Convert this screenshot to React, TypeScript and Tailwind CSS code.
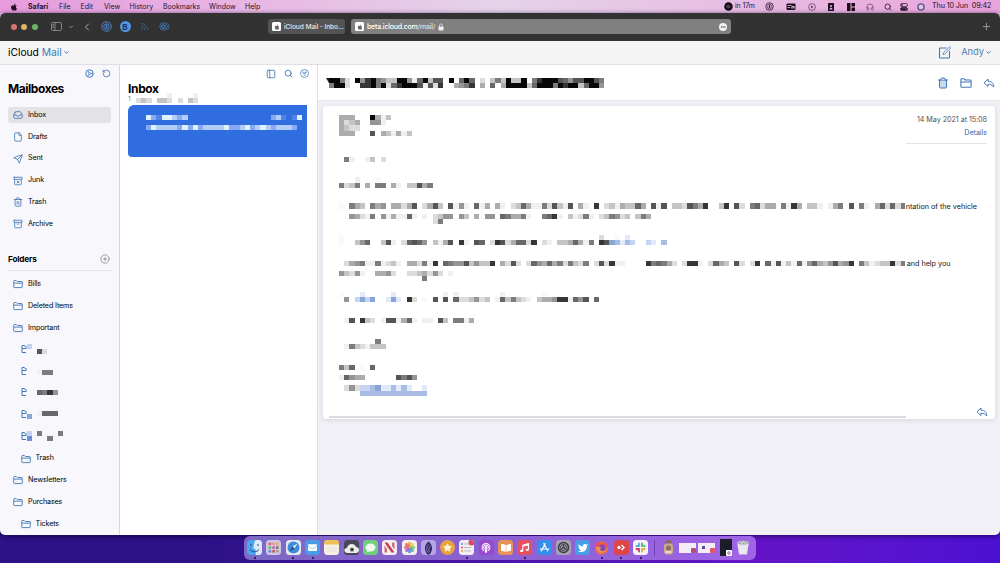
import React from "react";
import {
  Archive, ArchiveX, ChevronDown, ChevronLeft, CirclePlus, Ellipsis, File, Headphones, Inbox,
  PanelLeft, Plus, RotateCcw, Rss, Search, Send, Trash2,
} from "lucide-react";
import { FaApple, FaTwitter, FaSlack, FaMusic, FaPodcast, FaBookOpen, FaStar, FaEnvelope } from "react-icons/fa";

const SHADES: Record<string, string> = {
  "0": "#f9f9f9", "1": "#f0f0f0", "2": "#dcdcdc", "3": "#c4c4c4", "4": "#acacac", "5": "#959595",
  "6": "#7c7c7c", "7": "#686868", "8": "#555555", "9": "#363636", k: "#080808",
  a: "#e2eaf9", b: "#c3d3f1", c: "#a9bce3", d: "#88a5d8", e: "#6f8fd0",
  w: "#dff0ff", x: "#b3cdfb", y: "#86aaf4", z: "#5084ea",
};

type Row = [number, string];

function Mosaic({ cols, rows, data, cell = 5.2 }: { cols: number; rows: number; data: Row[]; cell?: number }) {
  return (
    <svg className="block shrink-0" width={cols * cell} height={rows * cell} viewBox={`0 0 ${cols} ${rows}`} shapeRendering="crispEdges">
      {data.flatMap(([r, runs]) =>
        runs.split(" ").flatMap((run) => {
          const [start, cells] = run.split(":");
          return [...cells].map((c, i) => (
            <rect key={`${r}-${start}-${i}`} x={Number(start) + i} y={r} width={1} height={1} fill={SHADES[c]} />
          ));
        })
      )}
    </svg>
  );
}

const SUBJECT: Row[] = [
  [0, "0:kk62 5:k59k6533kk 15:517k38 21:8 23:k 25:7k7 27:7 29:2 31:363k33k 39:69kkk87587 48:8kk86"],
  [1, "0:6kk2 6:99k6k279kkk81829 24:4569 29:4 31:7 33:4kkkk37kkk6k9kk37kk5"],
];

const BODY: Row[] = [
  [0, "0:444 6:k413"],
  [1, "0:4234 6:551"],
  [2, "0:4322"],
  [3, "0:444 6:8 8:4314 12:13"],
  [8, "1:61 5:13 8:2"],
  [12, "3:1 7:0"],
  [13, "0:6236 5:4 7:66 10:41 13:33846"],
  [17, "0:0 2:643 6:645 10:44248 16:2483 21:814 23:51 26:71 28:4 30:41 33:237411 39:628 42:31 44:8 46:41 49:9 51:231 54:43374 60:81 62:8 64:3328649 73:39 76:82 79:67244 85:6194 90:331 94:146 98:8 100:61 103:472726"],
  [19, "2:5421 6:6 8:51 10:41 12:171 16:1 18:2355 23:53 26:4 28:55 31:764461 39:6791 44:3126 48:1 50:23652 55:3 57:364"],
  [20, "18:26"],
  [23, "0:0 50:2 53:0 55:a"],
  [24, "0:0 3:357 8:381 12:27875 18:3148 23:91 26:87 29:29824772 37:9 39:21 42:334741 48:6 50:98dcacb 59:ba 62:c"],
  [28, "1:245611 7:61 9:231 13:442619 20:7655835339 31:4282 36:275474626326 49:282912 54:1 59:967642 66:2991 71:2743 76:82 79:29 82:7181 86:31 88:71 90:574358459 100:631 103:23392 108:6"],
  [30, "0:53251 7:4452 13:22342 18:52 21:1"],
  [31, "16:6"],
  [34, "0:0 4:a 10:a 20:1 22:1 31:1 39:0"],
  [35, "1:5 3:bdb 6:d 9:ada 13:92 16:0 18:8 20:8 22:7223523 30:1736321 38:3445991758 49:7"],
  [39, "1:18 4:93 6:2 8:188 11:1471 16:11 19:83 22:6614"],
  [43, "7:6"],
  [44, "1:16321333"],
  [48, "0:637 4:0 6:7"],
  [50, "0:17544 11:8685"],
  [52, "1:252bbcdaacaca 16:a"],
  [53, "4:ccccccccccccc"],
];

const PREVIEW: Row[] = [
  [0, "0:wyzwwxyx 24:yxz 28:zw"],
  [2, "0:ywxxxxywywyxxxxwyyxwyxwxyxxxy"],
];

const ICON = "text-[#4477b4] shrink-0";

function FolderIcon({ size = 10 }: { size?: number }) {
  return (
    <svg className={ICON} width={size} height={size} viewBox="0 0 20 20" fill="none" stroke="currentColor" strokeWidth={1.8} strokeLinejoin="round">
      <path d="M1.500 16V4.200C1.500 3.400 2 3 2.800 3h4l2 2h8.400c.8 0 1.300.5 1.300 1.300V16c0 .8-.5 1.200-1.300 1.200H2.800c-.8 0-1.300-.4-1.300-1.200ZM1.500 8.200h17" />
    </svg>
  );
}

function ReplyIcon() {
  return (
    <svg className={ICON} width="12" height="12" viewBox="0 0 24 24" fill="none" stroke="currentColor" strokeWidth="2" strokeLinejoin="round">
      <path d="M10 4 2 11.500 10 19v-4.500c5 0 8 1 11.500 5.500 0-7-3.500-11.500-11.500-11.500Z" />
    </svg>
  );
}

function ComposeIcon() {
  return (
    <svg className={ICON + " ml-auto mr-[10px]"} width="13" height="13" viewBox="0 0 26 26" fill="none" stroke="currentColor" strokeWidth="2.200">
      <path d="M17 4H4.500C3.500 4 3 4.500 3 5.500v17c0 1 .5 1.500 1.500 1.500h17c1 0 1.500-.5 1.500-1.500V10" />
      <path d="m10 17 1-3.500L23.500 1 26 3.500 13.500 16Z" strokeWidth="1.500" />
    </svg>
  );
}

function Item({ icon, label, active }: { icon: React.ReactNode; label: string; active?: boolean }) {
  return (
    <div className="flex h-[21.850px] items-center px-2">
      <div className={"flex h-[16px] w-full items-center gap-[5px] rounded-[3px] pl-[5px] " + (active ? "bg-[#e3e3e5]" : "")}>
        {icon}
        <span>{label}</span>
      </div>
    </div>
  );
}

function SubItem({ label, data, badge, nudge = "" }: { label?: string; data?: Row[]; badge?: Row[]; nudge?: string }) {
  return (
    <div className="flex h-[21.850px] items-center pl-[20.500px]">
      {label ? <FolderIcon /> : (
        <div className="-mt-[2px] flex w-[11px] items-center">
          <svg className={ICON} width="6" height="10" viewBox="0 0 12 20" fill="none" stroke="currentColor" strokeWidth="2">
            <path d="M10 17H2V3h5l2 3h3M2 9h9" />
          </svg>
          {badge && <Mosaic cols={1} rows={2} cell={5} data={badge} />}
        </div>
      )}
      {label ? <span className="ml-[5px]">{label}</span> : <div className={"ml-[5px] " + nudge}><Mosaic cols={6} rows={2} data={data!} /></div>}
    </div>
  );
}

const MENUS = [
  ["File", "w-[21.500px]"], ["Edit", "w-[23.500px]"], ["View", "w-[25.500px]"], ["History", "w-[33.500px]"],
  ["Bookmarks", "w-[46px]"], ["Window", "w-[36px]"], ["Help", "w-[20px]"],
];

function MenuBar() {
  return (
    <div className="flex h-[13px] shrink-0 items-center bg-linear-to-r from-[#e79adc] via-[#e5d3ea] to-[#e9a3db] pt-[0.500px] text-[7px] text-[#24102a]">
      <FaApple className="ml-[10px] h-[8px] w-[8px]" />
      <span className="ml-[10px] w-[31px] font-bold">Safari</span>
      {MENUS.map(([m, w]) => <span key={m} className={w}>{m}</span>)}
      <div className="ml-auto flex items-center pr-[8px]">
        <svg width="9" height="9" viewBox="0 0 18 18"><circle cx="9" cy="9" r="8.500" fill="#120812" /><path d="M4 9h1m1-2v4m2-6v8m2-7v6m2-4v3m2-2h1" stroke="#a98aa6" fill="none" /></svg>
        <span className="w-[26px] pl-[2px] tracking-[-0.1px]">in 17m</span>
        <span className="flex w-[21px] justify-center"><svg width="9" height="9" viewBox="0 0 18 18" fill="none" stroke="#3a2038"><circle cx="9" cy="9" r="7.500" strokeWidth="1.800" /><circle cx="9" cy="9" r="4.500" strokeWidth="1.200" /><path d="M9 5.500v7" strokeWidth="2.600" /></svg></span>
        <span className="flex w-[22px] justify-center"><svg width="10" height="8" viewBox="0 0 20 16"><rect x="1" y="1" width="18" height="13" rx="2" fill="#1d0d1d" /><path d="M3 5h8M3 9h5" stroke="#e6bfdf" strokeWidth="1.600" /><circle cx="14" cy="9" r="3.500" fill="#e6bfdf" /><path d="M12 9h4l-2 6z" fill="#1d0d1d" /></svg></span>
        <span className="flex w-[20px] justify-center"><svg width="8" height="8" viewBox="0 0 16 16"><circle cx="8" cy="8" r="6.800" fill="none" stroke="#5c3d59" strokeWidth="1.400" /><path d="m6 5 5 3-5 3z" fill="#5c3d59" /></svg></span>
        <span className="flex w-[18px] justify-center"><svg width="6" height="8" viewBox="0 0 12 16"><rect width="12" height="16" rx="1" fill="#1d0d1d" /><circle cx="6" cy="6" r="2" fill="#e6bfdf" /><path d="M3 13c0-5 6-5 6 0" fill="#e6bfdf" /></svg></span>
        <span className="flex w-[21px] justify-center"><svg width="8" height="8" viewBox="0 0 16 16" fill="#1d0d1d"><path d="M0 0h7v16H0zM9 0h7v7H9zM9 9h7v7H9z" /></svg></span>
        <span className="flex w-[18px] justify-center"><Headphones size={8} strokeWidth={2} className="text-[#5c3d59]" /></span>
        <span className="flex w-[17px] justify-center"><Search size={8} strokeWidth={2.4} /></span>
        <span className="flex w-[16px] justify-center"><svg width="8" height="8" viewBox="0 0 16 16" fill="none" stroke="#3a2038" strokeWidth="1.500"><rect x="1" y="1" width="14" height="6" rx="3" /><circle cx="4" cy="4" r="1.500" /><rect x="1" y="9" width="14" height="6" rx="3" fill="#3a2038" /><circle cx="12" cy="12" r="1.500" fill="#eee" /></svg></span>
        <span className="flex w-[17px] justify-center"><svg width="8" height="8" viewBox="0 0 16 16"><circle cx="8" cy="8" r="7.500" fill="#5a5483" /><circle cx="8" cy="8" r="4.800" fill="#dcc8ef" /></svg></span>
        <span className="ml-[3px] w-[60px] whitespace-nowrap text-[7.200px] tracking-[-0.12px]">Thu 10 Jun&nbsp; 09:42</span>
      </div>
    </div>
  );
}

function Toolbar() {
  return (
    <div className="flex h-[27.500px] shrink-0 items-center rounded-t-[5px] bg-[#323232] text-[#a8a8a8]">
      <div className="ml-[10.500px] flex w-[40px] gap-[4.500px]">
        <i className="h-[6px] w-[6px] rounded-full bg-[#d87570]" />
        <i className="h-[6px] w-[6px] rounded-full bg-[#e0b368]" />
        <i className="h-[6px] w-[6px] rounded-full bg-[#6cb565]" />
      </div>
      <svg width="11" height="9" viewBox="0 0 22 18" fill="none" stroke="currentColor" strokeWidth="1.400"><rect x="1" y="1" width="20" height="16" rx="2.500" /><path d="M8 1v16M3 5h3M3 8h3M3 11h3" /></svg>
      <ChevronDown size={6} strokeWidth={3} className="ml-[6px]" />
      <ChevronLeft size={12} strokeWidth={2} className="ml-[7px]" />
      <svg className="ml-[8px]" width="11" height="11" viewBox="0 0 22 22" fill="none" stroke="#4e86c8"><circle cx="11" cy="11" r="9.500" strokeWidth="2" /><circle cx="11" cy="11" r="5.500" strokeWidth="2" /><path d="M11 7v8" strokeWidth="3" /></svg>
      <span className="ml-[8px] flex h-[11px] w-[11px] items-center justify-center rounded-full bg-[#5094e2] text-[8px] font-bold text-[#1e3352]">B</span>
      <Rss size={9} strokeWidth={2} className="ml-[9px] text-[#426c9b]" />
      <svg className="ml-[10px]" width="11" height="9" viewBox="0 0 22 18" fill="none" stroke="#4679b4" strokeWidth="1.600"><circle cx="9" cy="9" r="7.500" /><circle cx="9" cy="9" r="3.500" strokeWidth="2.500" /><path d="M16 2c5 3 5 11 0 14" /></svg>
      <div className="ml-[98.500px] flex h-[15px] w-[77px] items-center gap-[3px] rounded-[3px] bg-[#545454] pl-[4px] text-[6.700px] font-medium text-[#e4e4e4]">
        <span className="flex h-[9px] w-[9px] items-center justify-center rounded-[1.500px] bg-white"><FaApple size={6} color="#666" /></span>
        <span className="whitespace-nowrap tracking-[-0.120px]">iCloud Mail - Inbo...</span>
      </div>
      <div className="ml-[6px] flex h-[15px] w-[380px] items-center rounded-[3px] bg-[#808080] px-[4px] text-[7px] font-medium tracking-[-0.220px] text-white">
        <span className="mr-[3px] flex h-[9px] w-[9px] items-center justify-center rounded-[1.500px] bg-white"><FaApple size={6} color="#666" /></span>
        beta.icloud.com<span className="text-[#dedede]">/mail/</span>
        <svg className="ml-[3px]" width="6" height="8" viewBox="0 0 12 16"><rect x="1" y="7" width="10" height="8" rx="1.500" fill="#eee" /><path d="M3 8V5c0-4 6-4 6 0v3" fill="none" stroke="#eee" strokeWidth="1.600" /></svg>
        <span className="ml-auto flex h-[8px] w-[8px] items-center justify-center rounded-full bg-[#f2f2f2]"><Ellipsis size={6} color="#666" strokeWidth={3} /></span>
      </div>
      <Plus size={11} strokeWidth={1.8} className="ml-auto mr-[8px]" />
    </div>
  );
}

function Sidebar() {
  return (
    <aside className="flex w-[120px] shrink-0 flex-col border-r border-[#d6d6dc] bg-[#f7f7fc] text-[7.200px] tracking-[-0.15px] text-black">
      <div className="flex h-[17px] items-center justify-end gap-[8px] pr-[8px]">
        <svg className={ICON} width="9" height="9" viewBox="0 0 18 18" fill="none" stroke="currentColor"><circle cx="9" cy="9" r="7.500" strokeWidth="2" /><circle cx="9" cy="9" r="2.200" strokeWidth="1.500" /><path d="M11 9h5M8 7 5.500 3.500M8 11l-2.500 3.500" strokeWidth="1.500" /></svg>
        <RotateCcw size={9} strokeWidth={2.2} className={ICON} />
      </div>
      <h1 className="h-[22.500px] pl-[8px] text-[12px] leading-[13px] font-bold tracking-[-0.450px]">Mailboxes</h1>
      <Item active label="Inbox" icon={<Inbox size={10} strokeWidth={2} className={ICON} />} />
      <Item label="Drafts" icon={<File size={10} strokeWidth={2} className={ICON} />} />
      <Item label="Sent" icon={<Send size={10} strokeWidth={2} className={ICON} />} />
      <Item label="Junk" icon={<ArchiveX size={10} strokeWidth={2} className={ICON} />} />
      <Item label="Trash" icon={<Trash2 size={10} strokeWidth={2} className={ICON} />} />
      <Item label="Archive" icon={<Archive size={10} strokeWidth={2} className={ICON} />} />
      <div className="mx-[8px] mt-[13px] mb-[3px] flex h-[22.500px] items-center justify-between border-b border-[#e4e4e9]">
        <h2 className="text-[8.200px] font-bold">Folders</h2>
        <CirclePlus size={10} strokeWidth={1.7} className="mr-[1.500px] text-[#77777c]" />
      </div>
      <Item label="Bills" icon={<FolderIcon />} />
      <Item label="Deleted Items" icon={<FolderIcon />} />
      <Item label="Important" icon={<FolderIcon />} />
      <SubItem badge={[[0, "0:b"]]} data={[[1, "0:82"]]} nudge="pb-[1px]" />
      <SubItem data={[[1, "0:166"]]} nudge="pb-[3px]" />
      <SubItem data={[[1, "0:7695"]]} nudge="pb-[6px]" />
      <SubItem badge={[[1, "0:d"]]} data={[[0, "0:1777"]]} nudge="pt-[2px]" />
      <SubItem badge={[[0, "0:b"], [1, "0:e"]]} data={[[0, "0:6 4:6"], [1, "2:6"]]} nudge="pb-[1px]" />
      <SubItem label="Trash" />
      <Item label="Newsletters" icon={<FolderIcon />} />
      <Item label="Purchases" icon={<FolderIcon />} />
      <SubItem label="Tickets" />
    </aside>
  );
}

function MessageList() {
  return (
    <section className="flex w-[198px] shrink-0 flex-col border-r border-[#e0e0e4] bg-white">
      <div className="flex h-[17px] items-center justify-end gap-[7.500px] pr-[8px]">
        <PanelLeft size={10} strokeWidth={2} className={ICON} />
        <Search size={9} strokeWidth={2.4} className={ICON} />
        <svg className={ICON} width="9" height="9" viewBox="0 0 18 18" fill="none" stroke="currentColor" strokeWidth="1.500"><circle cx="9" cy="9" r="8" /><path d="M4.500 6.500h9M6 9.500h6M7.500 12.500h3" /></svg>
      </div>
      <h1 className="h-[13px] pl-[8px] text-[12px] leading-[13px] font-bold tracking-[-0.350px] text-black">Inbox</h1>
      <div className="flex h-[9.500px] pl-[8px] text-[6.500px] leading-[8px] text-[#777]">
        <span className="w-[7.500px]">1</span>
        <div className="-mt-[2px]">
          <Mosaic cols={14} rows={2} data={[[0, "6:1 11:1"], [1, "0:232 4:332 8:2 10:32"]]} />
        </div>
      </div>
      <div className="ml-[8px] h-[52px] w-[179px] rounded-tl-[6px] rounded-bl-[4px] bg-[#2f6de1] pt-[10px] pl-[18px]">
        <Mosaic cols={31} rows={3} data={PREVIEW} />
      </div>
    </section>
  );
}

function Reader() {
  return (
    <main className="flex min-w-0 flex-1 flex-col bg-[#f1f0f6]">
      <div className="flex h-[36px] shrink-0 items-center border-b border-[#e4e4ea] bg-white pt-[1px] pl-[8px]">
        <svg width="3" height="10" viewBox="0 0 3 10"><path d="M0 0h3v5z" fill="#222" /></svg>
        <Mosaic cols={53} rows={2} data={SUBJECT} />
        <div className="ml-auto flex items-center gap-[11px] pr-[5.500px]">
          <Trash2 size={12} strokeWidth={2} fill="#c8daf0" className={ICON} />
          <FolderIcon size={12} />
          <ReplyIcon />
        </div>
      </div>
      <article className="mt-[4.500px] mr-[5.500px] ml-[5px] flex h-[313.500px] rounded-[3px] bg-white pt-[9.300px] pl-[15.700px] text-[7.200px] text-[#151515] shadow-[0_1px_5px_rgba(60,60,90,0.15)]">
        <div className="flex w-[567px] shrink-0 flex-col">
          <Mosaic cols={109} rows={54} data={BODY} />
          <div className="mt-[20px] -ml-[10px] h-[2px] w-[577px] bg-[#dcdbe1]" />
        </div>
        <div className="flex min-w-0 flex-1 flex-col whitespace-nowrap">
          <div className="mr-[7.500px] flex h-[29.500px] flex-col items-end gap-[4.500px] border-b border-[#e3e3e6] tracking-[-0.050px] text-[#505050]">
            <span className="leading-[9px]">14 May 2021 at 15:08</span>
            <span className="leading-[9px] text-[#2f68a8]">Details</span>
          </div>
          <span className="mt-[58px] leading-[9px]">ntation of the vehicle</span>
          <span className="mt-[48px] pl-[1px] leading-[9px]">and help you</span>
          <div className="mt-auto mr-[7px] mb-[1.500px] self-end"><ReplyIcon /></div>
        </div>
      </article>
    </main>
  );
}

function DockApp({ bg, dot, children }: { bg: string; dot?: boolean; children?: React.ReactNode }) {
  return (
    <div className="flex w-[19.300px] shrink-0 flex-col items-center pt-[4px]">
      <div className={"flex h-[15px] w-[15px] items-center justify-center overflow-hidden rounded-[3.500px] text-white " + bg}>{children}</div>
      {dot && <i className="mt-[1.500px] h-[2px] w-[2px] rounded-full bg-[#160b3c]" />}
    </div>
  );
}

const PETALS = ["#f0a33a", "#e8d24b", "#8cc665", "#50b3a0", "#5a90dd", "#9a6bcc", "#dd6aa8", "#ea6650"];

function Dock() {
  return (
    <div className="flex h-[24px] w-[512px] rounded-[6px] bg-linear-to-r from-[#7d69c4] via-[#8b60d2] to-[#a064e6] pl-[1px]">
      <DockApp bg="bg-[#4ba4ee]" dot><svg width="15" height="15" viewBox="0 0 30 30"><path d="M17 0h13v30H18c-1-5-1-9-1-12h-4c0-7 1-13 4-18Z" fill="#dcebf7" /><path d="M8 8v4M22 8v4M6 19c5 6 13 6 18 0" stroke="#204b80" strokeWidth="2" fill="none" /></svg></DockApp>
      <DockApp bg="bg-[#cfc7e6]"><svg width="15" height="15" viewBox="0 0 15 15">{["#d66", "#e98", "#da6", "#6b7", "#c6a", "#876", "#68c", "#c55", "#999"].map((c, i) => <rect key={c} x={2.5 + (i % 3) * 3.7} y={2.5 + Math.floor(i / 3) * 3.7} width="2.700" height="2.700" rx=".6" fill={c} />)}</svg></DockApp>
      <DockApp bg="bg-[#e4e9f2]" dot><svg width="13" height="13" viewBox="0 0 26 26"><circle cx="13" cy="13" r="12" fill="#3e8bdc" /><path d="m21 5-6 10-4-4z" fill="#eee" /><path d="m5 21 6-10 4 4z" fill="#1f4b86" /></svg></DockApp>
      <DockApp bg="bg-[#4a9bea]" dot><FaEnvelope size={9} /></DockApp>
      <DockApp bg="bg-[#f5f0e4]"><svg width="15" height="15"><rect width="15" height="4.500" fill="#edbf55" /><path d="M2 8h11M2 11h11" stroke="#ddd" strokeWidth=".7" /></svg></DockApp>
      <DockApp bg="bg-[#494856]"><svg width="15" height="15" viewBox="0 0 15 15"><path d="M3 13c-4-1-3-5 0-5 1-5 8-5 9-1 4 0 4 6 0 6Z" fill="#eee" /><path d="m8 7 .8 1.600 1.700.2-1.200 1.200.3 1.700L8 11l-1.600.7.3-1.700-1.200-1.200 1.700-.2z" fill="#333" /></svg></DockApp>
      <DockApp bg="bg-[#70ce7d]"><svg width="11" height="10" viewBox="0 0 22 20"><ellipse cx="11" cy="9" rx="10" ry="8" fill="#eef9ef" /><path d="m5 14-2 5 7-3z" fill="#eef9ef" /></svg></DockApp>
      <DockApp bg="bg-[#f3eef2]"><svg width="11" height="11" viewBox="0 0 22 22" fill="#c93f4d"><path d="M1 1h6l14 20h-6z" /><path d="M1 7v14h5v-7zM21 15V1h-5v7z" opacity=".75" /></svg></DockApp>
      <DockApp bg="bg-[#f4eeee]"><svg width="13" height="13" viewBox="0 0 26 26">{PETALS.map((c, i) => <ellipse key={c} cx="13" cy="7" rx="3.600" ry="5.500" fill={c} opacity=".85" transform={`rotate(${i * 45} 13 13)`} />)}</svg></DockApp>
      <DockApp bg="bg-[#b3a5e6]"><svg width="9" height="14" viewBox="0 0 18 28"><path d="M9 1c10 8 8 19 2 26H7C-1 18 1 8 9 1Z" fill="#31275f" /><path d="M11 6c-7 5-7 13-2 18M14 10c-5 4-5 8-3 12" stroke="#a59be0" fill="none" strokeWidth="1.500" /></svg></DockApp>
      <DockApp bg="bg-[#e7a341] rounded-full"><FaStar size={9} color="#fff2cf" /></DockApp>
      <DockApp bg="bg-[#f2eef5]" dot><svg width="15" height="15"><path d="M5 4h7M5 7.500h7M5 11h7" stroke="#bbb" /><circle cx="3" cy="4" r="1" fill="#58d" /><circle cx="3" cy="7.500" r="1" fill="#d55" /><circle cx="3" cy="11" r="1" fill="#e93" /><circle cx="12.500" cy="2.500" r="3" fill="#df4b58" /></svg></DockApp>
      <DockApp bg="bg-[#9849cf]"><FaPodcast size={10} /></DockApp>
      <DockApp bg="bg-[#e99157]"><FaBookOpen size={10} /></DockApp>
      <DockApp bg="bg-[#e8505f]" dot><FaMusic size={9} /></DockApp>
      <DockApp bg="bg-[#368dea]"><svg width="11" height="11" viewBox="0 0 22 22" stroke="#fff" strokeWidth="2.200" strokeLinecap="round"><path d="m12.500 3-8 15M9.500 3l8 15M2 14h11M17 14h3" /></svg></DockApp>
      <DockApp bg="bg-[#a6a3b0]"><svg width="13" height="13" viewBox="0 0 26 26" fill="none" stroke="#3c3a47"><circle cx="13" cy="13" r="10" strokeWidth="3" /><circle cx="13" cy="13" r="6" strokeWidth="2" /><circle cx="13" cy="13" r="2" strokeWidth="2" /><path d="M13 13V5M13 13l-7 5M13 13l7 5" strokeWidth="1.500" /></svg></DockApp>
      <DockApp bg="bg-[#469fe6]"><FaTwitter size={10} /></DockApp>
      <DockApp bg="bg-transparent" dot><svg width="15" height="15" viewBox="0 0 30 30"><circle cx="15" cy="16" r="13.500" fill="#e66d45" /><path d="M2 14C3 7 6 5 7 2c2 4 6 4 9 6C20 2 29 9 28 18c-2-4-5-4-8-4" fill="#e84c61" /><circle cx="16" cy="16" r="6.500" fill="#7b4aab" /><path d="M4 14c6-3 8 1 12 1-4 1-5 4-2 6 5 3 10-1 11-5 0 13-19 14-21-2Z" fill="#f08a62" /></svg></DockApp>
      <DockApp bg="bg-[#de4548]" dot><svg width="11" height="9" viewBox="0 0 22 18" fill="#fff"><path d="m6 5 4 4-4 4-4-4zM10 5l2-2 6 6-6 6-2-2 4-4z" /></svg></DockApp>
      <DockApp bg="bg-[#f5f3f7]" dot><svg width="11" height="11" viewBox="0 0 22 22" strokeWidth="3.600" strokeLinecap="round"><path d="M8 3v5M3 8h4" stroke="#4bb7dc" /><path d="M14 3v5M19 8h-1" stroke="#45a879" /><path d="M14 14v5M14 14h5" stroke="#e0ad3d" /><path d="M8 14v5M3 14h4" stroke="#cf3d64" /></svg></DockApp>
      <div className="mx-[4px] my-[4px] w-px bg-[#6f40b4]" />
      <DockApp bg="bg-transparent"><svg width="11" height="15" viewBox="0 0 22 30"><rect x="5" y="1" width="12" height="6" rx="2" fill="#8a694f" /><rect x="2" y="7" width="18" height="22" rx="6" fill="#c9ab86" /><circle cx="11" cy="16" r="5" fill="#8f6a63" /><path d="M5 24h12" stroke="#eee" strokeWidth="3" /></svg></DockApp>
      <div className="mt-[7px] mr-[2px] flex h-[10px] w-[17px] shrink-0 items-end justify-end bg-[#f4edf6]"><i className="h-[5px] w-[5px] rounded-[1px] bg-[#b04c7a]" /></div>
      <div className="mt-[7px] mr-[5px] flex h-[10px] w-[17px] shrink-0 items-end justify-between bg-[#f4edf6]"><i className="mb-[4px] ml-[4px] h-[3px] w-[3px] bg-[#5b4a9d]" /><i className="h-[5px] w-[5px] rounded-[1px] bg-[#e35569]" /></div>
      <div className="mt-[3px] mr-[2px] flex h-[17px] w-[12px] shrink-0 items-end justify-end bg-[#1c1c2b]"><span className="flex h-[6px] w-[6px] items-center justify-center rounded-[1px] bg-white"><FaSlack size={4} color="#945a9c" /></span></div>
      <DockApp bg="bg-transparent"><svg width="14" height="15" viewBox="0 0 28 30"><path d="M2 4h24l-4 25H6z" fill="#e6e1ed" /><ellipse cx="14" cy="5" rx="12" ry="4" fill="#aaa4b8" /><path d="m7 3 4 4 3-4 4 4 4-4M9 12l1 14M14 12v14M19 12l-1 14" stroke="#f8f6fb" fill="none" strokeWidth="1.500" /></svg></DockApp>
    </div>
  );
}

export default function App() {
  return (
    <div className="flex h-[563px] w-[1000px] flex-col overflow-hidden bg-linear-to-r from-[#2c1187] from-20% via-[#6514c6] via-75% to-[#4c10d4] font-['Inter','Liberation_Sans',sans-serif]">
      <MenuBar />
      <div className="flex h-[522px] shrink-0 flex-col bg-linear-to-b from-[#e6b7e2] from-5% to-transparent to-5%">
        <div className="flex h-full flex-col overflow-hidden rounded-[5px] shadow-[0_1px_5px_rgba(10,0,50,0.7)]">
          <Toolbar />
          <header className="flex h-[24.500px] shrink-0 items-center border-b border-[#dfdfe1] bg-[#f4f4f5] px-[8px] text-[10.300px]">
            <span className="tracking-[-0.030px] text-black">iCloud <span className="text-[#3f7bbd]">Mail</span></span>
            <ChevronDown size={7} strokeWidth={3.2} className={"ml-[1px] " + ICON} />
            <ComposeIcon />
            <span className="text-[9.300px] text-[#4a7bb5]">Andy</span>
            <ChevronDown size={7} strokeWidth={3.2} className={"ml-[1px] " + ICON} />
          </header>
          <div className="flex min-h-0 flex-1">
            <Sidebar />
            <MessageList />
            <Reader />
          </div>
        </div>
      </div>
      <div className="mt-[1px] flex shrink-0 justify-center">
        <Dock />
      </div>
    </div>
  );
}
